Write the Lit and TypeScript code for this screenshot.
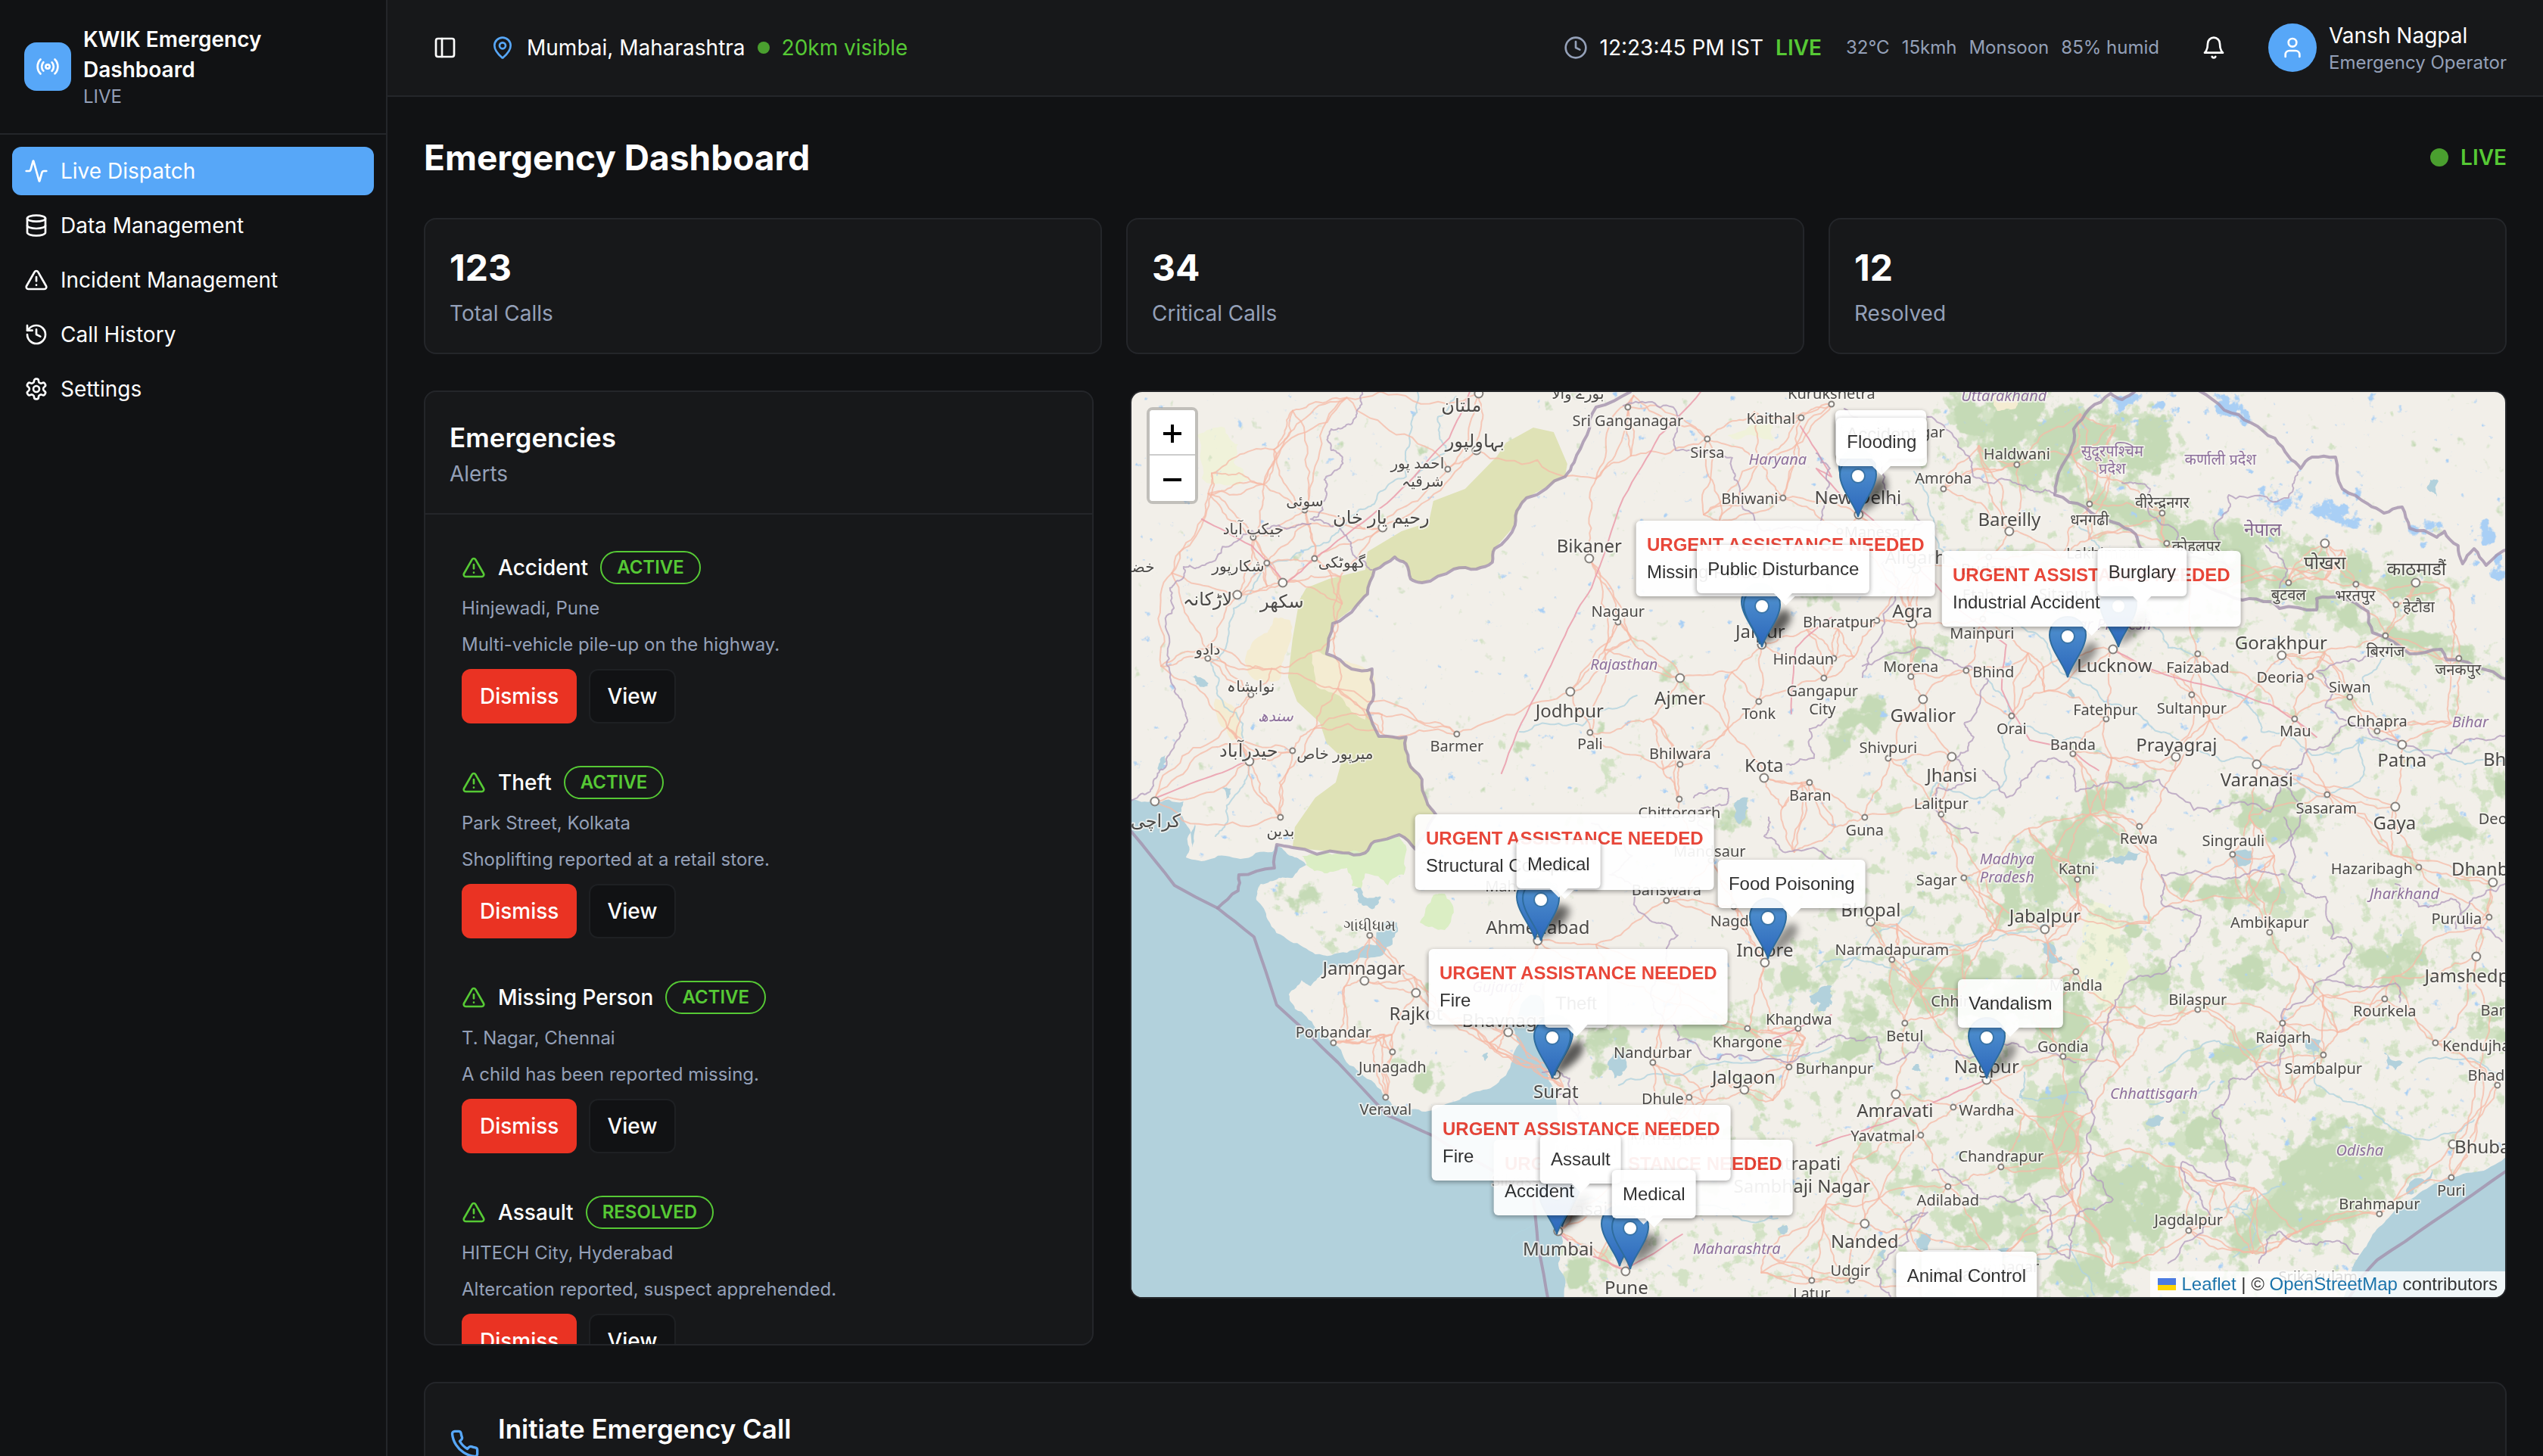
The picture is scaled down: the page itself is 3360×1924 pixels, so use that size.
import { LitElement, html, svg, css } from "lit";
import { customElement, property } from "lit/decorators.js";

/* ---------- icons ---------- */

const ICONS: Record<string, unknown> = {
  panel: svg`<rect x="3" y="3" width="18" height="18" rx="2"/><path d="M9 3v18"/>`,
  pin: svg`<path d="M20 10c0 4.993-5.539 10.193-7.399 11.799a1 1 0 0 1-1.202 0C9.539 20.193 4 14.993 4 10a8 8 0 0 1 16 0"/><circle cx="12" cy="10" r="3"/>`,
  clock: svg`<circle cx="12" cy="12" r="10"/><path d="M12 6v6l4 2"/>`,
  bell: svg`<path d="M6 8a6 6 0 0 1 12 0c0 7 3 9 3 9H3s3-2 3-9"/><path d="M10.3 21a1.94 1.94 0 0 0 3.4 0"/>`,
  user: svg`<path d="M19 21v-2a4 4 0 0 0-4-4H9a4 4 0 0 0-4 4v2"/><circle cx="12" cy="7" r="4"/>`,
  radio: svg`<path d="M4.9 19.1C1 15.2 1 8.8 4.9 4.9"/><path d="M7.8 16.2c-2.3-2.3-2.3-6.1 0-8.5"/><circle cx="12" cy="12" r="2"/><path d="M16.2 7.8c2.3 2.3 2.3 6.1 0 8.5"/><path d="M19.1 4.9C23 8.8 23 15.1 19.1 19"/>`,
  activity: svg`<path d="M22 12h-2.48a2 2 0 0 0-1.93 1.46l-2.35 8.36a.25.25 0 0 1-.48 0L9.24 2.18a.25.25 0 0 0-.48 0l-2.35 8.36A2 2 0 0 1 4.49 12H2"/>`,
  database: svg`<ellipse cx="12" cy="5" rx="9" ry="3"/><path d="M3 5V19A9 3 0 0 0 21 19V5"/><path d="M3 12A9 3 0 0 0 21 12"/>`,
  alert: svg`<path d="m21.73 18-8-14a2 2 0 0 0-3.48 0l-8 14A2 2 0 0 0 4 21h16a2 2 0 0 0 1.73-3"/><path d="M12 9v4"/><path d="M12 17h.01"/>`,
  history: svg`<path d="M3 12a9 9 0 1 0 9-9 9.75 9.75 0 0 0-6.74 2.74L3 8"/><path d="M3 3v5h5"/><path d="M12 7v5l4 2"/>`,
  settings: svg`<path d="M12.22 2h-.44a2 2 0 0 0-2 2v.18a2 2 0 0 1-1 1.73l-.43.25a2 2 0 0 1-2 0l-.15-.08a2 2 0 0 0-2.73.73l-.22.38a2 2 0 0 0 .73 2.73l.15.1a2 2 0 0 1 1 1.72v.51a2 2 0 0 1-1 1.74l-.15.09a2 2 0 0 0-.73 2.73l.22.38a2 2 0 0 0 2.73.73l.15-.08a2 2 0 0 1 2 0l.43.25a2 2 0 0 1 1 1.73V20a2 2 0 0 0 2 2h.44a2 2 0 0 0 2-2v-.18a2 2 0 0 1 1-1.73l.43-.25a2 2 0 0 1 2 0l.15.08a2 2 0 0 0 2.73-.73l.22-.39a2 2 0 0 0-.73-2.73l-.15-.08a2 2 0 0 1-1-1.74v-.5a2 2 0 0 1 1-1.74l.15-.09a2 2 0 0 0 .73-2.73l-.22-.38a2 2 0 0 0-2.73-.73l-.15.08a2 2 0 0 1-2 0l-.43-.25a2 2 0 0 1-1-1.73V4a2 2 0 0 0-2-2z"/><circle cx="12" cy="12" r="3"/>`,
  phone: svg`<path d="M22 16.92v3a2 2 0 0 1-2.18 2 19.79 19.79 0 0 1-8.63-3.07 19.5 19.5 0 0 1-6-6 19.79 19.79 0 0 1-3.07-8.67A2 2 0 0 1 4.11 2h3a2 2 0 0 1 2 1.72 12.84 12.84 0 0 0 .7 2.81 2 2 0 0 1-.45 2.11L8.09 9.91a16 16 0 0 0 6 6l1.27-1.27a2 2 0 0 1 2.11-.45 12.84 12.84 0 0 0 2.81.7A2 2 0 0 1 22 16.92z"/>`,
};

const icon = (name: string, cls = "") => html`
  <svg class="icon ${cls}" viewBox="0 0 24 24" fill="none" stroke="currentColor" stroke-width="2"
    stroke-linecap="round" stroke-linejoin="round" aria-hidden="true">${ICONS[name]}</svg>`;

const iconStyles = css`
  * { box-sizing: border-box; }
  .icon { width: 32px; height: 32px; flex: none; display: block; }
`;

/* ---------- map geometry ---------- */

type Point = [number, number];

/* The map is surveyed on four sheets; each has its own grid: origin and scale per axis. */
const SHEETS: Record<string, [number, number, number, number]> = {
  A: [-15, 0.5995, -18, 0.3954],
  B: [905, 0.6122, -18, 0.3954],
  C: [-15, 0.5995, 562, 0.4209],
  D: [905, 0.6122, 562, 0.4209],
};

const project = (sheet: string, u: number, v: number): Point => {
  const [ox, sx, oy, sy] = SHEETS[sheet];
  return [Math.round(ox + u * sx), Math.round(oy + v * sy)];
};

/* "A 10,20 30,40 C 5,6": sheet letters switch the grid of the points that follow. */
const trace = (text: string): Point[] => {
  let sheet = "A";
  const points: Point[] = [];
  for (const token of text.trim().split(/\s+/)) {
    if (token in SHEETS) sheet = token;
    else {
      const [u, v] = token.split(",").map(Number);
      points.push(project(sheet, u, v));
    }
  }
  return points;
};

const randomFrom = (seed: number) => () => {
  seed = (seed * 1664525 + 1013904223) % 4294967296;
  return seed / 4294967296;
};

/* Midpoint displacement gives lines a natural, surveyed wobble. */
const roughen = (points: Point[], amount: number, depth: number, seed: number): Point[] => {
  const rnd = randomFrom(seed);
  let line = points;
  for (let d = 0; d < depth; d++) {
    const next: Point[] = [line[0]];
    for (let i = 1; i < line.length; i++) {
      const [x0, y0] = line[i - 1];
      const [x1, y1] = line[i];
      const len = Math.hypot(x1 - x0, y1 - y0);
      const off = (rnd() - 0.5) * amount * len;
      const nx = len ? -(y1 - y0) / len : 0;
      const ny = len ? (x1 - x0) / len : 0;
      next.push([(x0 + x1) / 2 + nx * off, (y0 + y1) / 2 + ny * off], line[i]);
    }
    line = next;
  }
  return line;
};

const toPath = (points: Point[], close = false) =>
  "M" + points.map(([x, y]) => `${x.toFixed(1)} ${y.toFixed(1)}`).join("L") + (close ? "Z" : "");

const roughPath = (text: string, amount: number, depth: number, seed: number, close = false) => {
  const pts = trace(text);
  if (close) pts.push(pts[0]);
  return toPath(roughen(pts, amount, depth, seed), close);
};

const ARABIAN_SEA = `A -600,1405 20,1408 75,1415 140,1415 135,1460 150,1500 160,1568 C 165,20 150,60 145,125 200,130 265,130 335,110 345,85 385,125
  410,150 380,190 350,190 310,210 300,260 325,320 375,390 430,430 500,425 545,400 590,400 560,440 500,460 450,480 420,530 400,510 372,555
  385,600 430,660 480,720 530,800 585,880 620,920 680,922 740,890 800,855 850,810 880,710 865,660 880,600 900,560 925,560 935,620 945,680
  930,740 945,830 960,880 965,960 955,1050 950,1150 960,1250 972,1310 965,1400 980,1470 985,1560 980,2200 -600,2200`;
const BENGAL_BAY = `D 1500,1055 1440,1110 1370,1130 1300,1180 1240,1250 1200,1310 1170,1380 1155,1425 1130,1530 1130,1800 1800,1800 1800,1055`;
const LAKES = [
  "D 1275,1185 1285,1140 1330,1108 1325,1140 1290,1180", "D 485,395 510,400 515,440 540,450 520,455 490,425",
  "D 620,140 650,125 700,110 690,135 660,150", "D 890,120 940,105 940,140 900,160", "D 0,560 35,530 30,590 5,610",
  "D 1225,740 1240,760 1270,770 1250,800 1235,780", "D 1055,700 1090,700 1085,740 1065,730", "D 710,960 750,940 740,970",
  "B 1325,340 1342,345 1340,400 1325,380", "C 515,230 530,220 545,255 575,250 550,285 525,265",
  "C 1080,760 1130,740 1115,790 1090,820", "C 1520,560 1568,530 1568,590 1530,590", "A 155,995 195,1020 175,1030",
  "A 85,1310 100,1260 95,1300", "A 225,1370 245,1370 230,1410", "A 1355,1420 1385,1400 1380,1470 1365,1490",
  "C 575,340 610,330 600,400 560,440", "D 225,1310 250,1310 240,1360 215,1340", "D 390,1360 420,1355 400,1385",
  "D 205,790 220,775 225,795", "D 520,880 540,870 545,900", "D 440,860 450,850 445,900", "D 130,1375 150,1360 150,1390",
  "C 1450,1290 1470,1280 1465,1310", "C 795,750 810,740 805,765", "B 540,1050 550,1040 555,1070",
];
const DESERT_STRIP = `A 910,165 955,180 985,285 980,330 895,400 880,430 870,490 825,570 820,615 785,638 735,638 665,682 640,670 630,620
  605,597 560,640 545,720 520,760 468,820 455,920 510,970 555,970 558,1040 545,1110 570,1195 630,1200 635,1280 665,1340 675,1410 695,1457
  C 690,0 650,100 615,55 560,75 540,112 490,112 380,95 A 385,1500 430,1400 475,1350 490,1270 455,1220 440,1150 390,1080 370,1000 380,870
  395,740 410,700 460,670 540,640 545,580 620,510 680,480 690,410 760,370 830,260 850,215`;
const SALT_FLATS = ["C 400,120 490,115 540,112 560,78 615,58 630,90 625,180 590,215 540,175 530,225 510,215 500,160 450,175 410,150",
  "C 690,245 715,240 735,300 715,355 660,330"];
const SANDS = ["A 340,800 375,810 370,900 350,1010 290,1000 280,910 325,850", "A 210,1070 245,1090 270,1190 245,1210",
  "A 420,910 460,930 555,985 540,1140 490,1070 430,1020", "B 380,60 440,70 430,100 390,110"];
const PALE_GREEN = ["A 170,190 230,165 260,220 250,280 285,340 180,335", "A 1340,190 1440,150 1440,210 1360,205",
  "D 590,270 640,280 660,400 680,470 630,620 600,560 560,440"];

const RIVAL_BORDER = `A 1125,45 1050,95 1030,190 1000,280 980,330 895,400 880,430 870,490 825,570 820,615 785,638 735,638 665,682
  640,670 630,620 605,597 560,640 545,720 520,760 468,820 455,920 510,970 555,970 558,1040 545,1110 570,1195 630,1200 635,1280
  665,1340 675,1410 695,1457 C 690,0 650,100 615,55 560,75 540,112 490,112 380,95 345,85 340,158 262,180 260,230 215,285`;
const NATIONAL = [
  RIVAL_BORDER,
  "C 25,45 120,215 215,285 295,375 345,590 480,770 590,935 690,1000 810,1100 910,1190 920,1340 945,1530",
  "D 1500,1100 1330,1270 1210,1390 1180,1440 1140,1530",
  "B 825,40 880,105 940,150 990,200 1020,260 1045,300 1070,262 1120,262 1135,370 1190,420 1225,450 1265,430 1280,500 1340,530 1355,510 1385,560 1395,620 1420,570 1445,625 1500,570",
  "B 690,40 660,70 635,50 590,100 555,170 548,250 520,340 515,390 580,430 640,480 690,520 700,570 790,650 850,700 920,740 980,745 1000,770 1080,775 1080,735 1130,730 1190,780 1200,850 1280,920 1350,905 1360,940 1420,960 1500,1010",
];
const STATES = [
  "A 535,40 520,130 465,170 465,240 490,270 450,340 455,390 420,470 480,490 500,530 520,600 555,640",
  "A 420,485 350,490 270,520 190,620 140,630 110,700 100,830 110,1000 145,1120 140,1170 100,1300 70,1370 25,1410",
  "A 1110,90 1220,95 1225,240 1290,250 1350,265 1365,360 1400,480 1480,500 B 0,520 20,420 30,300 0,250",
  "B 60,100 140,260 150,400 230,480 140,620 180,680 120,900 100,1000",
  "B 240,130 330,260 340,330 430,350 470,380 515,390", "B 100,960 250,910 330,960 370,1010 320,1150 340,1200 300,1270 320,1350 260,1370 250,1440 350,1520",
  "B 360,1310 410,1400 460,1320 540,1280 560,1380 640,1350 740,1340 850,1450 980,1450 1000,1340 1060,1240 1120,1190 1190,1160",
  "B 1190,1160 1100,1100 1110,1040 1080,980 1200,930", "B 870,560 860,490 890,390 1020,400 1040,310",
  "B 660,350 720,370 740,480 800,600 900,640", "B 970,560 1010,620 1000,700", "B 1500,1180 1400,1210 1330,1270 1190,1170",
  "B 990,1340 1050,1440 1000,1568", "D 1010,0 1020,180 1060,240 1100,250 1110,380 1155,400 1100,510 1220,530 1250,520 1260,580",
  "D 745,180 890,190 960,170 1010,180", "D 745,180 745,270 830,310 800,400 760,480 680,510 640,600 620,680 570,840 600,950 570,1130 490,1200 500,1350 545,1385",
  "D 1100,510 1010,600 1000,780 930,820 890,830 855,930 890,1060 905,1140 790,1080 810,1170 850,1260 760,1400",
  "D 545,1385 560,1250 640,1200 590,1100", "D 0,720 60,690 130,690 140,770 210,740 230,700 300,740 420,710 440,720 500,740 560,770",
  "D 250,1110 310,1140 380,1190 460,1180 500,1240", "D 190,1270 240,1240 200,1330 130,1420 160,1505",
  "C 1215,640 1230,700 1300,760 1450,760 1520,740", "C 1200,640 1170,560 1210,480 1230,370 1180,330 1130,220 1080,180 1130,120 1040,20",
  "A 1470,1290 1530,1270 1520,1170 1568,1130", "A 1265,1400 1340,1370 1340,1420 1270,1450 1300,1520", "C 1430,0 1420,60 1470,110 1568,130",
  "C 960,860 1010,940 990,820 930,800", "D 1250,210 1300,280 1380,260 1400,350 1480,390", "D 1380,350 1430,250 1500,200",
  "D 955,1400 1000,1300 1060,1340 1100,1330 1170,1370",
];
const RIVERS = [
  "A 655,45 640,180 630,330 560,420 500,480 440,560 310,650 250,770 240,850 200,950 215,1060 270,1200 285,1290 265,1370 230,1500 C 210,60",
  "A 740,60 700,130 720,240 650,330", "B 210,310 240,420 290,600 330,720 420,800 490,870 550,1000 620,1080",
  "B 560,480 610,560 640,640", "B 710,790 760,900 850,980 930,1090 960,1180 1040,1220 1070,1260 1180,1200 1280,1250 1400,1290 1500,1280",
  "B 620,1080 740,1180 800,1240 880,1280 960,1290 1040,1300", "B 370,1010 420,1120 400,1200 410,1330 360,1400 260,1350 250,1440",
  "B 430,1160 520,1220 560,1200 640,1270", "B 1240,900 1180,1000 1200,1090", "D 0,470 80,440 180,480 250,440 360,390 480,350 500,330",
  "D 60,470 180,330 210,280", "D 740,800 860,700 900,720 1060,700 1080,840 1200,920 1260,990 1370,990 1420,950",
  "D 450,800 440,880 520,880 580,870", "D 720,900 820,870 860,830", "D 400,1380 460,1380 540,1340 600,1500",
  "D 920,1240 950,1300 900,1380", "D 860,1230 930,1230 1000,1160", "C 1100,840 1250,800 1400,770 1568,720", "A 880,1180 1020,1160 1140,1060",
  "C 860,1330 1000,1200 1300,1220 1450,1260", "B 1000,1340 1100,1400 1180,1330 1170,1210", "D 1300,770 1420,760 1486,820",
];
const TRUNK = [
  "A 1280,45 1190,190 1110,400 1040,700 980,860 915,1060 840,1320", "A 770,45 725,200 620,370 480,540 430,600 365,685 290,560 180,470",
  "A 295,1270 200,1330 80,1400", "A 1500,160 1568,330 B 0,300 60,400 140,500 210,620 B 300,760 410,890 400,1040 460,1210 540,1230 610,1310",
  "B 640,910 720,970 850,1030 980,1090 1080,1200", "D 0,1030 110,980 200,930 260,890 360,830", "C 1430,700 1568,620",
  "A 1480,1120 1490,900 1568,800", "C 970,1310 1010,1360 1110,1420 1240,1310",
];

const FOREST = [
  "B 250,40 500,40 620,130 520,380 430,330 350,250", "B 540,310 700,420 900,520 1000,640 1200,800 1440,900 1480,990 1200,850 1000,740 860,660 700,520 560,400",
  "B 1000,560 1160,580 1400,700 1300,760 1080,640", "B 850,470 1000,490 1060,560 900,560", "B 590,90 760,120 780,300 640,360 560,240",
  "B 20,1150 100,1040 160,1090 60,1260 20,1260", "B 480,1540 600,1350 740,1330 660,1440 560,1520", "B 900,1380 1050,1380 1110,1500 1000,1568 880,1460",
  "B 1420,1340 1500,1290 1500,1400", "B 1300,1500 1380,1460 1430,1530 1340,1568", "D 360,300 420,120 620,20 700,60 540,230 460,330",
  "D 770,200 1010,190 1040,270 900,290 780,260", "D 90,580 180,490 380,430 400,500 200,560", "D 200,540 330,490 560,500 600,640 560,800 440,640 250,620",
  "D 660,500 760,470 820,540 700,560", "D 890,440 980,420 980,540 890,530", "D 1140,420 1300,380 1330,470 1260,560 1160,480",
  "D 1410,600 1500,590 1486,700 1420,680", "D 1060,980 1160,930 1250,1050 1240,1180 1050,1330 960,1230 1010,1080",
  "D 1110,940 1200,970 1300,1010 1290,1080", "D 620,1080 760,1060 800,1200 680,1420 560,1300 590,1160", "D 400,1000 560,960 580,1060 430,1180",
  "D 270,1240 460,1200 500,1340 330,1330", "D 460,840 580,830 580,1000 470,960", "D 760,920 860,930 890,1050 800,1060", "D 820,760 960,680 980,750 860,800",
  "D 110,1050 150,1040 170,1090 130,1090", "D 880,1270 960,1190 1010,1280 900,1400", "D 640,350 700,320 710,380 650,400",
  "D 190,1110 240,1120 230,1190 200,1180", "D 510,1400 620,1380 680,1505 520,1505", "D 60,690 130,640 140,720 20,780", "D 60,620 140,590 180,640 90,660",
  "C 640,790 700,780 710,860 640,850", "C 1010,660 1130,660 1110,760 1040,780", "C 1440,480 1520,440 1568,440 1568,520 1450,540",
  "C 1200,640 1420,640 1400,690 1220,690", "C 975,1360 1050,1380 1070,1505 990,1505", "C 340,210 450,230 440,270 330,270",
  "C 440,360 540,380 520,410 450,400", "C 600,720 625,720 620,760 600,750", "A 1130,1200 1020,1440 970,1480 1100,1310",
  "A 1290,1450 1400,1420 1380,1500 1310,1510", "A 1210,930 1240,940 1230,1080 1210,1080", "A 870,1210 920,1220 900,1260",
  "A 1480,720 1568,680 1568,760", "B 120,910 280,870 290,910 160,960", "C 1040,1380 1110,1390 1090,1450",
];
const GLACIERS = ["B 640,60 690,60 680,110 650,100", "B 720,100 760,60 770,120", "B 840,50 920,70 940,150 900,140", "B 960,395 1030,390 1030,430 980,430",
  "B 1060,420 1130,410 1200,500 1160,480 1080,470", "B 1120,360 1180,390 1170,410", "B 1260,460 1350,510 1300,530", "B 1425,510 1470,500 1470,560 1430,550",
  "B 1180,100 1200,100 1200,150", "B 1440,640 1486,600 1486,660", "B 1040,290 1055,300 1050,340"];

/* ---------- map labels ---------- */

type Size = "city" | "town" | "state" | "nation";
/* sheet, text, label centre, size, optional dot */
type Label = [string, string, number, number, Size, number?, number?];

const LABELS: Label[] = [
  ["A", "ملتان", 753, 85, "city", 790, 50], ["A", "بورے والا", 1010, 48, "town"], ["A", "بہاولپور", 782, 205, "city", 785, 239],
  ["A", "احمد پور", 655, 280, "town", 722, 303], ["A", "شرقیہ", 668, 342, "town"], ["A", "سوئی", 407, 408, "town", 407, 440],
  ["A", "رحیم یار خان", 576, 460, "city", 578, 497], ["A", "جیکب آباد", 294, 500, "town", 294, 531], ["A", "گھوٹکی", 488, 612, "town", 429, 602],
  ["A", "شکارپور", 260, 625, "town", 324, 618], ["A", "خضدار", 30, 627, "town"], ["A", "لاڑکانہ", 194, 733, "city", 258, 723], ["A", "سکھر", 357, 742, "city", 358, 683],
  ["A", "دادو", 194, 903, "town", 194, 936], ["A", "نوابشاہ", 288, 1028, "town", 288, 1057], ["A", "سندھ", 344, 1126, "state"],
  ["A", "حیدرآباد", 284, 1240, "city", 285, 1280], ["A", "میرپور خاص", 474, 1252, "town", 381, 1244], ["A", "کراچی", 78, 1474, "city", 77, 1415],
  ["A", "بدین", 354, 1510, "town", 354, 1466], ["A", "Sri Ganganagar", 1119, 140, "town", 1119, 95], ["A", "Kaithal", 1434, 132, "town", 1502, 131],
  ["A", "Sirsa", 1295, 245, "town", 1295, 202], ["A", "Haryana", 1450, 267, "state"], ["A", "Bhiwani", 1387, 400, "town", 1462, 399],
  ["A", "Bikaner", 1034, 556, "city", 1035, 602], ["A", "Nagaur", 1098, 777, "town", 1098, 814], ["A", "Jaipur", 1412, 843, "city", 1414, 890],
  ["A", "Rajasthan", 1111, 954, "state"], ["A", "Ajmer", 1234, 1065, "city", 1235, 1001], ["A", "Jodhpur", 990, 1108, "city", 992, 1047],
  ["A", "Tonk", 1408, 1119, "town", 1408, 1081], ["A", "Barmer", 742, 1226, "town", 742, 1188], ["A", "Pali", 1036, 1220, "town", 1036, 1183],
  ["A", "Bhilwara", 1234, 1252, "town", 1235, 1290], ["A", "Kota", 1420, 1289, "city", 1419, 1335], ["A", "Baran", 1521, 1391, "town", 1519, 1350],
  ["A", "Chittorgarh", 1232, 1448, "town", 1232, 1406], ["A", "Gangapur", 1548, 1043, "town", 1552, 1001], ["A", "City", 1548, 1103, "town"],
  ["A", "Hindaun", 1506, 937, "town", 1573, 937],
  ["B", "Kurukshetra", 33, 48, "town", 33, 87], ["B", "Uttarakhand", 405, 56, "state"], ["B", "Muzaffarnagar", 163, 176, "town"], ["B", "Haldwani", 433, 250, "town", 433, 289],
  ["B", "Amroha", 275, 332, "town", 275, 369], ["B", "New Delhi", 90, 395, "city", 91, 455], ["B", "Bareilly", 417, 468, "city", 416, 511],
  ["B", "Manesar", 128, 512, "town", 50, 510], ["B", "Aligarh", 214, 594, "city", 216, 637], ["B", "Budaun", 373, 635, "town", 373, 597], ["B", "Lakhimpur", 622, 582, "town"],
  ["B", "Etah", 350, 720, "town", 360, 803], ["B", "Sitapur", 536, 719, "town"], ["B", "Agra", 207, 775, "city", 207, 820], ["B", "Bharatpur", 49, 811, "town", 131, 809],
  ["B", "Mainpuri", 358, 850, "town"], ["B", "Uttar Pradesh", 622, 820, "state"], ["B", "Lucknow", 643, 957, "city", 641, 906], ["B", "Faizabad", 823, 964, "town", 824, 920],
  ["B", "Gorakhpur", 1003, 881, "city", 1004, 926], ["B", "Deoria", 1002, 996, "town", 1066, 996], ["B", "Siwan", 1151, 1029, "town", 1151, 1066],
  ["B", "Morena", 204, 960, "town", 204, 996], ["B", "Bhind", 382, 979, "town", 324, 976], ["B", "Gwalior", 230, 1122, "city", 230, 1072],
  ["B", "Fatehpur", 624, 1104, "town", 625, 1138], ["B", "Sultanpur", 811, 1099, "town", 811, 1057], ["B", "Orai", 422, 1169, "town", 422, 1128],
  ["B", "Mau", 1034, 1177, "town", 1033, 1138], ["B", "Chhapra", 1210, 1143, "town", 1210, 1179], ["B", "Bihar", 1412, 1145, "state"],
  ["B", "Banda", 553, 1221, "town", 553, 1255], ["B", "Prayagraj", 777, 1221, "city", 776, 1265], ["B", "Shivpuri", 155, 1232, "town", 155, 1269],
  ["B", "Patna", 1265, 1271, "city", 1265, 1223], ["B", "Bhagalpur", 1536, 1269, "city"], ["B", "Jhansi", 292, 1323, "city", 292, 1265],
  ["B", "Varanasi", 950, 1339, "city", 951, 1289], ["B", "Lalitpur", 269, 1419, "town", 269, 1457], ["B", "Sasaram", 1101, 1433, "town", 1102, 1390],
  ["B", "Guna", 105, 1508, "town", 105, 1466], ["B", "Gaya", 1248, 1482, "city", 1249, 1431], ["B", "Deoghar", 1497, 1469, "town"],
  ["B", "Rewa", 696, 1534, "town", 697, 1496], ["B", "Singrauli", 900, 1543, "town", 899, 1590],
  ["B", "सुदूरपश्चिम", 639, 240, "state"], ["B", "प्रदेश", 639, 298, "state"], ["B", "कर्णाली प्रदेश", 872, 267, "state"], ["B", "वीरेन्द्रनगर", 746, 413, "town", 746, 450],
  ["B", "धनगढी", 589, 470, "town", 589, 421], ["B", "नेपाल", 964, 502, "nation"], ["B", "कोहलपुर", 820, 558, "town", 756, 551], ["B", "पोखरा", 1098, 611, "city", 1098, 551],
  ["B", "काठमाडौं", 1295, 633, "city", 1294, 683], ["B", "बुटवल", 1019, 721, "town", 1020, 683], ["B", "भरतपुर", 1163, 724, "town", 1164, 688],
  ["B", "हेटौडा", 1300, 761, "town", 1252, 755], ["B", "बिरगंज", 1229, 910, "town", 1229, 859], ["B", "जनकपुर", 1385, 971, "town", 1386, 936],
  ["C", "Mandsaur", 1300, 104, "town", 1303, 136], ["C", "Banswara", 1205, 226, "town", 1205, 261], ["C", "Mahesana", 885, 214, "town"], ["C", "ગાંધીધામ", 551, 337, "town", 551, 370],
  ["C", "Ahmedabad", 921, 342, "city", 921, 388], ["C", "Nagda", 1353, 323, "town", 1352, 280], ["C", "Indore", 1421, 413, "city", 1422, 456],
  ["C", "Jamnagar", 537, 471, "city", 538, 514], ["C", "Gujarat", 833, 530, "state"], ["C", "Rajkot", 652, 612, "city", 652, 551], ["C", "Bhavnagar", 855, 635, "city", 855, 675],
  ["C", "Porbandar", 471, 673, "town", 471, 707], ["C", "Khandwa", 1496, 631, "town", 1495, 664], ["C", "Khargone", 1383, 704, "town", 1383, 664],
  ["C", "Junagadh", 600, 781, "town", 601, 737], ["C", "Nandurbar", 1175, 737, "town", 1175, 769], ["C", "Burhanpur", 1575, 787, "town", 1475, 784],
  ["C", "Jalgaon", 1375, 813, "city", 1376, 855], ["C", "Surat", 960, 858, "city", 961, 808], ["C", "Dhule", 1196, 881, "town", 1255, 879],
  ["C", "Veraval", 586, 915, "town", 586, 878], ["C", "Malegaon", 1218, 1004, "city", 1219, 958], ["C", "Mumbai", 966, 1353, "city", 966, 1300],
  ["C", "Vasai-Virar", 1078, 1225, "city"], ["C", "Silvassa", 880, 1137, "town"],
  ["C", "Chhatrapati", 1478, 1084, "city"], ["C", "Sambhaji Nagar", 1503, 1155, "city"], ["C", "Maharashtra", 1360, 1352, "state"],
  ["C", "Pune", 1116, 1472, "city", 1115, 1426], ["C", "Latur", 1524, 1492, "town", 1525, 1453],
  ["D", "Madhya", 412, 128, "state"], ["D", "Pradesh", 412, 185, "state"], ["D", "Katni", 562, 159, "town", 563, 195], ["D", "Sagar", 259, 194, "town", 318, 190],
  ["D", "Hazaribagh", 1199, 159, "town", 1301, 156], ["D", "Dhanbad", 1455, 160, "city", 1461, 204], ["D", "Jharkhand", 1270, 238, "state"],
  ["D", "Bhopal", 118, 287, "city", 118, 328], ["D", "Jabalpur", 493, 307, "city", 494, 352], ["D", "Ambikapur", 978, 327, "town", 978, 361],
  ["D", "Purulia", 1382, 315, "town", 1452, 313], ["D", "Narmadapuram", 164, 413, "town", 164, 447], ["D", "Mandla", 560, 525, "town", 560, 484],
  ["D", "Jamshedpur", 1425, 494, "city", 1425, 436], ["D", "Bilaspur", 824, 571, "town", 824, 604], ["D", "Chhindwara", 340, 575, "town"],
  ["D", "Rourkela", 1226, 607, "town", 1226, 570], ["D", "Baripada", 1502, 604, "town"], ["D", "Betul", 191, 684, "town", 191, 646], ["D", "Raigarh", 1008, 688, "town", 1007, 646],
  ["D", "Gondia", 533, 717, "town", 533, 750], ["D", "Kendujhar", 1431, 716, "town", 1336, 707], ["D", "Nagpur", 368, 779, "city", 368, 825],
  ["D", "Sambalpur", 1095, 787, "town", 1095, 746], ["D", "Bhadrak", 1470, 807, "town", 1470, 841], ["D", "Chhattisgarh", 728, 865, "state"],
  ["D", "Amravati", 170, 917, "city", 171, 869], ["D", "Wardha", 368, 917, "town", 295, 911], ["D", "Yavatmal", 143, 998, "town", 226, 998],
  ["D", "Chandrapur", 398, 1063, "town", 399, 1097], ["D", "Odisha", 1173, 1043, "state"], ["D", "Bhubaneswar", 1505, 1030, "city", 1373, 1026],
  ["D", "Adilabad", 285, 1200, "town", 285, 1160], ["D", "Puri", 1370, 1169, "town", 1370, 1130], ["D", "Brahmapur", 1216, 1211, "town", 1216, 1245],
  ["D", "Jagdalpur", 804, 1262, "town", 804, 1297], ["D", "Nanded", 104, 1327, "city", 105, 1277], ["D", "Udgir", 74, 1421, "town", 76, 1455],
  ["D", "Karimnagar", 390, 1410, "town"], ["D", "Srikakulam", 1083, 1440, "town"],
];

/* Roads join each town to its closest neighbours. */
const buildRoads = (): string[] => {
  const rnd = randomFrom(77);
  const towns: Point[] = LABELS.filter((l) => l[5] !== undefined).map((l) => project(l[0], l[5]!, l[6]!));
  for (let i = 0; i < 150; i++) {
    const x = 560 + rnd() * 1250;
    const y = rnd() * 1196;
    if (!(x > 1560 && y > 960) && !(x > 1400 && y < 200)) towns.push([x, y]);
  }
  for (let i = 0; i < 22; i++) towns.push([rnd() * 360, rnd() * 480]);
  for (let i = 0; i < 10; i++) towns.push([270 + rnd() * 220, 760 + rnd() * 120]);
  const seen = new Set<string>();
  const roads: string[] = [];
  towns.forEach((a, i) => {
    const near = towns
      .map((b, j) => ({ j, d: Math.hypot(a[0] - b[0], a[1] - b[1]) }))
      .filter((n) => n.j !== i && n.d < 190)
      .sort((p, q) => p.d - q.d)
      .slice(0, 4);
    for (const { j } of near) {
      const key = i < j ? `${i}-${j}` : `${j}-${i}`;
      if (seen.has(key)) continue;
      seen.add(key);
      roads.push(toPath(roughen([a, towns[j]], 0.26, 4, i * 131 + j)));
    }
  });
  return roads;
};

interface Incident { x: number; y: number; label: string; urgent?: boolean; }

const INCIDENTS: Incident[] = [
  { x: 960, y: 156, label: "Accident" },
  { x: 961, y: 166, label: "Flooding" },
  { x: 834, y: 338, label: "Missing Person", urgent: true },
  { x: 831, y: 334, label: "Public Disturbance" },
  { x: 1238, y: 378, label: "Industrial Accident", urgent: true },
  { x: 1305, y: 338, label: "Burglary" },
  { x: 542, y: 726, label: "Structural Collapse", urgent: true },
  { x: 534, y: 724, label: "Medical" },
  { x: 842, y: 750, label: "Food Poisoning" },
  { x: 557, y: 908, label: "Theft" },
  { x: 560, y: 904, label: "Fire", urgent: true },
  { x: 646, y: 1156, label: "Accident", urgent: true },
  { x: 570, y: 1104, label: "Medical" },
  { x: 564, y: 1110, label: "Fire", urgent: true },
  { x: 563, y: 1114, label: "Assault" },
  { x: 660, y: 1160, label: "Medical" },
  { x: 1131, y: 908, label: "Vandalism" },
  { x: 1067, y: 1266, label: "Assault" },
  { x: 1073, y: 1268, label: "Animal Control" },
];

@customElement("incident-map")
class IncidentMap extends LitElement {
  static styles = css`
    * { box-sizing: border-box; }
    :host { display: block; position: relative; overflow: hidden; background: #f2efe9; font-family: "Liberation Sans", Arial, sans-serif; }
    .terrain { position: absolute; inset: 0; width: 100%; height: 100%; display: block; }
    .water { fill: #b2d1dc; }
    .strip { fill: #dfe2b6; }
    .salt { fill: #dbeec4; }
    .sand { fill: #f4ecd2; }
    .pale { fill: #f0f2da; }
    .line { fill: none; stroke-linejoin: round; stroke-linecap: round; }
    .river { stroke: #b2d3df; stroke-width: 2; opacity: 0.8; }
    .road { stroke: #f6b9a6; stroke-width: 2; opacity: 0.75; }
    .trunk { stroke: #eb9cab; stroke-width: 2; opacity: 0.85; }
    .province { stroke: #b49fbe; stroke-width: 2; opacity: 0.8; }
    .nation-line { stroke: #a391ac; stroke-width: 4; opacity: 0.8; }
    .place { fill: #4b4947; stroke: #f7f5f1; stroke-opacity: 0.75; stroke-width: 4; paint-order: stroke; stroke-linejoin: round; text-anchor: middle; dominant-baseline: central; font-family: "Noto Sans", "DejaVu Sans", sans-serif; }
    .town { font-size: 20px; }
    .city { font-size: 24px; }
    .nation { font-size: 24px; fill: #84668f; }
    .state { font-size: 20px; font-style: italic; fill: #8d6f9c; }
    .spot { fill: #fbfaf7; stroke: #85807c; stroke-width: 2; }
    .marker { position: absolute; width: 82px; height: 82px; margin: -82px 0 0 -26px; display: block; pointer-events: none; }
    .tip {
      position: absolute; transform: translate(-50%, -100%); margin: -68px 0 0 30px; padding: 14px; border-radius: 6px;
      background: #fff; opacity: 0.92; color: #222; font-size: 24px; line-height: 36px; white-space: nowrap;
      box-shadow: 0 2px 6px rgba(0, 0, 0, 0.4);
    }
    .tip::after { content: ""; position: absolute; left: 50%; top: 100%; margin-left: -12px; border: 12px solid transparent; border-bottom-width: 0; border-top-color: #fff; }
    .urgent-note { display: block; font-weight: 700; color: #e8392b; }
    .zoom { position: absolute; left: 20px; top: 20px; border: 4px solid rgba(0, 0, 0, 0.2); border-radius: 8px; background-clip: padding-box; display: flex; flex-direction: column; }
    .zoom-btn { width: 60px; height: 60px; border: 0; padding: 4px 0 0; background: #fff; display: grid; place-items: center; color: #000; }
    .zoom-btn:first-child { border-radius: 4px 4px 0 0; border-bottom: 2px solid #ccc; }
    .zoom-btn:last-child { border-radius: 0 0 4px 4px; }
    .sign { width: 26px; height: 26px; display: block; }
    .credit { position: absolute; right: 0; bottom: 0; display: flex; align-items: center; padding: 0 10px; background: rgba(255, 255, 255, 0.8); color: #333; font-size: 24px; line-height: 34px; white-space: pre; }
    .credit-link { color: #1c74ab; text-decoration: none; }
    .flag { width: 24px; height: 16px; margin-right: 8px; display: block; }
  `;

  private roads = buildRoads();

  private speckle(id: string, freq: number, seed: number, color: string, bias: number) {
    return svg`
      <filter id=${id} x="0" y="0" width="1815" height="1196" filterUnits="userSpaceOnUse" color-interpolation-filters="sRGB">
        <feGaussianBlur in="SourceAlpha" stdDeviation="9" result="soft"/>
        <feTurbulence type="fractalNoise" baseFrequency=${freq} numOctaves="4" seed=${seed} result="noise"/>
        <feComposite in="soft" in2="noise" operator="arithmetic" k1="0" k2="0.45" k3="1" k4=${bias}/>
        <feComponentTransfer result="mask"><feFuncA type="linear" slope="9" intercept="0"/></feComponentTransfer>
        <feFlood flood-color=${color}/>
        <feComposite operator="in" in2="mask"/>
      </filter>`;
  }

  private marker(p: Incident) {
    return html`
      <svg class="marker" viewBox="0 0 82 82" style="left:${p.x}px;top:${p.y}px" aria-hidden="true">
        <defs>
          <linearGradient id="body" x1="0" y1="0" x2="0" y2="1"><stop offset="0" stop-color="#5496d1"/><stop offset="1" stop-color="#2b66bb"/></linearGradient>
          <filter id="soft" x="-30%" y="-30%" width="160%" height="160%"><feGaussianBlur stdDeviation="5"/></filter>
        </defs>
        <path d="M25 80C30 64 40 44 52 36C64 30 68 42 60 53C52 64 38 72 25 80Z" fill="#000" opacity="0.4" filter="url(#soft)"/>
        <path d="M25 81C22 66 1 44 1 25A24 24 0 0 1 49 25C49 44 28 66 25 81Z" fill="url(#body)" stroke="#2e6c9e" stroke-width="2"/>
        <circle cx="25" cy="27" r="9" fill="#fff" stroke="#3a75a8" stroke-width="2"/>
      </svg>`;
  }

  render() {
    const pins = [...INCIDENTS].sort((a, b) => a.y - b.y);
    return html`
      <svg class="terrain" viewBox="0 0 1815 1196" preserveAspectRatio="xMidYMid slice" role="img" aria-label="Map of western and central India">
        <defs>
          ${this.speckle("woods", 0.035, 4, "#c5dab6", -0.77)}
          ${this.speckle("scrub", 0.05, 9, "#d3e2c5", -0.79)}
          ${this.speckle("ice", 0.06, 2, "#a9cff5", -0.76)}
        </defs>
        ${PALE_GREEN.map((t, i) => svg`<path class="pale" d=${roughPath(t, 0.3, 3, i + 40, true)}/>`)}
        <g filter="url(#scrub)">
          <path d="M1080 -20L1760 330L1815 440L1815 1196L660 1196L640 1000L800 780L900 600L1000 480L1180 560L1350 700L1600 620L1700 540L1300 330L1000 180Z" opacity="0.42"/>
          ${FOREST.map((t) => svg`<path d=${toPath(trace(t), true)} stroke="#000" stroke-width="22" opacity="0.6"/>`)}
        </g>
        <g filter="url(#woods)">${FOREST.map((t) => svg`<path d=${toPath(trace(t), true)}/>`)}</g>
        <g filter="url(#ice)">${GLACIERS.map((t) => svg`<path d=${toPath(trace(t), true)} stroke="#000" stroke-width="8"/>`)}</g>
        <path class="strip" d=${toPath(trace(DESERT_STRIP), true)}/>
        ${SANDS.map((t, i) => svg`<path class="sand" d=${roughPath(t, 0.3, 3, i + 10, true)}/>`)}
        <path class="water" d=${roughPath(ARABIAN_SEA, 0.24, 3, 5, true)}/>
        <path class="water" d=${roughPath(BENGAL_BAY, 0.12, 3, 6, true)}/>
        ${SALT_FLATS.map((t, i) => svg`<path class="salt" d=${roughPath(t, 0.3, 3, i + 20, true)}/>`)}
        ${LAKES.map((t, i) => svg`<path class="water" d=${roughPath(t, 0.5, 3, i + 30, true)}/>`)}
        ${RIVERS.map((t, i) => svg`<path class="line river" d=${roughPath(t, 0.3, 4, i + 60)}/>`)}
        ${this.roads.map((d) => svg`<path class="line road" d=${d}/>`)}
        ${TRUNK.map((t, i) => svg`<path class="line trunk" d=${roughPath(t, 0.06, 3, i + 90)}/>`)}
        ${STATES.map((t, i) => svg`<path class="line province" d=${roughPath(t, 0.4, 4, i + 120)}/>`)}
        ${NATIONAL.map((t, i) => svg`<path class="line nation-line" d=${roughPath(t, i > 0 && i < 3 ? 0.02 : 0.2, 2, i + 150)}/>`)}
        ${LABELS.map(([sheet, text, u, v, size, du, dv]) => {
          const [x, y] = project(sheet, u, v);
          const dot = du === undefined ? null : project(sheet, du, dv!);
          return svg`
            ${dot ? svg`<circle class="spot" cx=${dot[0]} cy=${dot[1]} r=${size === "city" ? 5.5 : 3.5}/>` : null}
            <text class="place ${size}" x=${x} y=${y}>${text}</text>`;
        })}
      </svg>
      ${pins.map((p) => this.marker(p))}
      ${INCIDENTS.map((p) => html`
        <div class="tip" style="left:${p.x}px;top:${p.y}px">${p.urgent ? html`<strong class="urgent-note">URGENT ASSISTANCE NEEDED</strong>` : null}${p.label}</div>`)}
      <div class="zoom">
        <button class="zoom-btn" type="button" aria-label="Zoom in"><svg class="sign" viewBox="0 0 26 26"><path d="M13 1v24M1 13h24" stroke="#000" stroke-width="4"/></svg></button>
        <button class="zoom-btn" type="button" aria-label="Zoom out"><svg class="sign" viewBox="0 0 26 26"><path d="M1 13h24" stroke="#000" stroke-width="4"/></svg></button>
      </div>
      <div class="credit"><svg class="flag" viewBox="0 0 24 16" aria-hidden="true"><rect width="24" height="9" fill="#4c7be1"/><rect y="9" width="24" height="7" fill="#ffd500"/></svg><a class="credit-link" href="#leaflet">Leaflet</a> | © <a class="credit-link" href="#osm">OpenStreetMap</a> contributors</div>
    `;
  }
}

/* ---------- alert row ---------- */

@customElement("alert-item")
class AlertItem extends LitElement {
  @property() heading = "";
  @property() status = "";
  @property() place = "";
  @property() note = "";

  static styles = [iconStyles, css`
    :host { display: flex; flex-direction: column; gap: 16px; padding: 24px; }
    .head { display: flex; align-items: center; gap: 16px; height: 44px; }
    .mark { color: #56c935; }
    .name { margin: 0; font-size: 28px; line-height: 40px; font-weight: 500; color: #fff; }
    .badge { border: 2px solid #56c935; border-radius: 22px; padding: 0 20px; font-size: 24px; line-height: 40px; font-weight: 600; color: #56c935; }
    .text { margin: 0; font-size: 24px; line-height: 32px; color: #94a0b8; }
    .actions { display: flex; gap: 16px; }
    .btn { height: 72px; padding: 0 24px; border-radius: 12px; font: inherit; font-size: 28px; font-weight: 500; color: #fff; }
    .dismiss { background: #ea3323; border: 0; }
    .view { padding: 0 22px; background: #111214; border: 2px solid #1e2023; }
  `];

  render() {
    return html`
      <div class="head">${icon("alert", "mark")}<h3 class="name">${this.heading}</h3><span class="badge">${this.status}</span></div>
      <p class="text">${this.place}</p>
      <p class="text">${this.note}</p>
      <div class="actions">
        <button class="btn dismiss" type="button">Dismiss</button>
        <button class="btn view" type="button">View</button>
      </div>`;
  }
}

/* ---------- page ---------- */

const NAV = [
  ["activity", "Live Dispatch"], ["database", "Data Management"], ["alert", "Incident Management"],
  ["history", "Call History"], ["settings", "Settings"],
];
const STATS = [["123", "Total Calls"], ["34", "Critical Calls"], ["12", "Resolved"]];
const WEATHER = ["32°C", "15kmh", "Monsoon", "85% humid"];
const ALERTS = [
  ["Accident", "ACTIVE", "Hinjewadi, Pune", "Multi-vehicle pile-up on the highway."],
  ["Theft", "ACTIVE", "Park Street, Kolkata", "Shoplifting reported at a retail store."],
  ["Missing Person", "ACTIVE", "T. Nagar, Chennai", "A child has been reported missing."],
  ["Assault", "RESOLVED", "HITECH City, Hyderabad", "Altercation reported, suspect apprehended."],
];

@customElement("app-root")
class AppRoot extends LitElement {
  static styles = [iconStyles, css`
    :host {
      display: grid; grid-template-columns: 512px minmax(0, 1fr); height: 100vh; overflow: hidden;
      background: #111214; color: #fff; font-family: Inter, "Open Sans", sans-serif; font-size: 28px; line-height: 40px;
    }
    .sidebar { border-right: 2px solid #24262a; }
    .brand { display: flex; align-items: center; gap: 16px; padding: 32px; border-bottom: 2px solid #24262a; }
    .logo { width: 62px; height: 64px; flex: none; border-radius: 16px; background: #57a7f8; display: grid; place-items: center; }
    .brand-name { margin: 0; max-width: 280px; font-size: 28px; line-height: 40px; font-weight: 600; }
    .brand-live { margin: 0; font-size: 24px; line-height: 32px; color: #94a0b8; }
    .nav { display: flex; flex-direction: column; gap: 8px; padding: 16px; }
    .nav-link { display: flex; align-items: center; gap: 16px; height: 64px; padding: 0 16px; border-radius: 12px; color: #fff; text-decoration: none; }
    .nav-link.active { background: #57a7f8; }
    .page { display: flex; flex-direction: column; min-width: 0; min-height: 0; }
    .topbar { display: flex; align-items: center; justify-content: space-between; flex: none; height: 128px; padding: 0 48px 2px 60px; background: #17181a; box-shadow: inset 0 -2px #24262a; }
    .cluster { display: flex; align-items: center; gap: 16px; }
    .plain { border: 0; padding: 0; background: none; color: inherit; display: grid; }
    .toggle { margin-right: 28px; }
    .blue { color: #57a7f8; }
    .dim { color: #94a0b8; }
    .green { color: #56c935; }
    .strong { font-weight: 600; }
    .dot { width: 16px; height: 16px; border-radius: 50%; background: #4a9f2f; }
    .dot.big { width: 24px; height: 24px; }
    .weather { display: flex; gap: 16px; margin: 0 40px 0 16px; padding: 0; list-style: none; font-size: 24px; color: #94a0b8; }
    .avatar { width: 64px; height: 64px; margin-left: 40px; border-radius: 50%; background: #57a7f8; display: grid; place-items: center; }
    .person { margin: 0; }
    .role { margin: 0; font-size: 24px; line-height: 32px; color: #94a0b8; }
    .content { flex: 1; min-height: 0; overflow: hidden; padding: 48px; display: flex; flex-direction: column; gap: 48px; }
    .content > * { flex: none; }
    .title-row { display: flex; align-items: center; justify-content: space-between; }
    .title { margin: 0; font-size: 46px; line-height: 64px; font-weight: 700; }
    .stats { display: grid; grid-template-columns: repeat(3, 1fr); gap: 32px; }
    .card { background: #17181a; border: 2px solid #24262a; border-radius: 16px; overflow: hidden; }
    .stat { padding: 32px; display: flex; flex-direction: column; gap: 8px; }
    .stat-value { margin: 0; font-size: 48px; line-height: 64px; font-weight: 700; }
    .stat-label { margin: 0; color: #94a0b8; }
    .board { display: grid; grid-template-columns: repeat(3, 1fr); gap: 48px; align-items: start; }
    .alerts-head { padding: 32px; border-bottom: 2px solid #24262a; }
    .card-title { margin: 0; font-size: 35px; line-height: 56px; font-weight: 600; }
    .alerts-sub { margin: 0; color: #94a0b8; }
    .alerts-list { height: 1096px; overflow: hidden; padding: 24px; display: flex; flex-direction: column; gap: 8px; }
    .alerts-list > * { flex: none; }
    .map-card { grid-column: span 2; height: 1200px; }
    .map { height: 100%; }
    .call { display: flex; align-items: center; gap: 24px; padding: 32px; }
    .call-icon { width: 40px; height: 40px; }
    .call-text { min-height: 96px; }
  `];

  render() {
    return html`
      <aside class="sidebar">
        <div class="brand">
          <div class="logo">${icon("radio")}</div>
          <div><p class="brand-name">KWIK Emergency Dashboard</p><p class="brand-live">LIVE</p></div>
        </div>
        <nav class="nav">
          ${NAV.map(([glyph, label], i) => html`<a class="nav-link ${i === 0 ? "active" : ""}" href="#${glyph}">${icon(glyph)}<span>${label}</span></a>`)}
        </nav>
      </aside>
      <div class="page">
        <header class="topbar">
          <div class="cluster">
            <button class="plain toggle" type="button" aria-label="Toggle sidebar">${icon("panel")}</button>
            ${icon("pin", "blue")}
            <span>Mumbai, Maharashtra</span>
            <span class="dot"></span>
            <span class="green">20km visible</span>
          </div>
          <div class="cluster">
            ${icon("clock", "dim")}
            <span>12:23:45 PM IST</span>
            <span class="green strong">LIVE</span>
            <ul class="weather">${WEATHER.map((w) => html`<li>${w}</li>`)}</ul>
            <button class="plain" type="button" aria-label="Notifications">${icon("bell")}</button>
            <div class="avatar">${icon("user")}</div>
            <div><p class="person">Vansh Nagpal</p><p class="role">Emergency Operator</p></div>
          </div>
        </header>
        <main class="content">
          <div class="title-row">
            <h1 class="title">Emergency Dashboard</h1>
            <div class="cluster"><span class="dot big"></span><span class="green strong">LIVE</span></div>
          </div>
          <section class="stats">
            ${STATS.map(([value, label]) => html`<div class="card stat"><p class="stat-value">${value}</p><p class="stat-label">${label}</p></div>`)}
          </section>
          <section class="board">
            <div class="card">
              <div class="alerts-head"><h2 class="card-title">Emergencies</h2><p class="alerts-sub">Alerts</p></div>
              <div class="alerts-list">
                ${ALERTS.map(([h, s, p, n]) => html`<alert-item .heading=${h} .status=${s} .place=${p} .note=${n}></alert-item>`)}
              </div>
            </div>
            <div class="card map-card"><incident-map class="map"></incident-map></div>
          </section>
          <section class="card call">
            ${icon("phone", "blue call-icon")}
            <div class="call-text"><h2 class="card-title">Initiate Emergency Call</h2></div>
          </section>
        </main>
      </div>`;
  }
}
